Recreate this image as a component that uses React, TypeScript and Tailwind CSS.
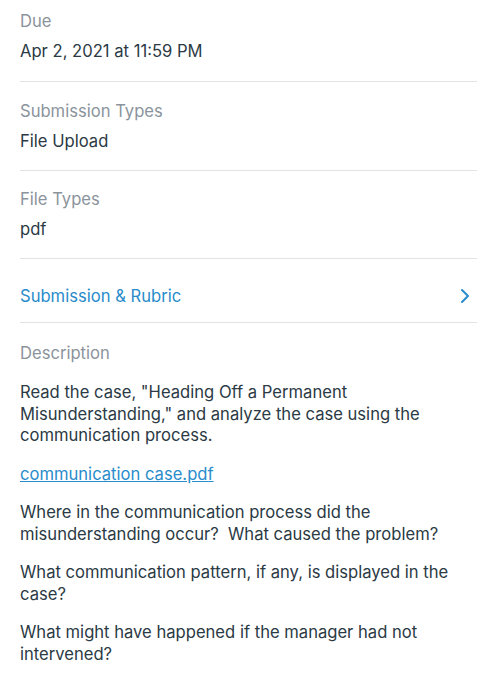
import React from "react";

function Field({ label, value, pt, pb }: { label: string; value: string; pt: string; pb: string }) {
  return (
    <div className={`${pt} ${pb} border-b border-[#e3e3e5]`}>
      <div className="text-[16.6px] leading-[20px] text-[#8b949c]">{label}</div>
      <div className="mt-[9px] text-[16.6px] leading-[22px] text-[#2b3a44]">{value}</div>
    </div>
  );
}

export default function App() {
  return (
    <div className="w-[497px] h-[700px] bg-white overflow-hidden" style={{ fontFamily: "Inter, 'Noto Sans', sans-serif" }}>
      <div className="ml-[20px] mr-[20px]">
        <Field pt="pt-[11px]" pb="pb-[19px]" label="Due" value="Apr 2, 2021 at 11:59 PM" />
        <Field pt="pt-[19px]" pb="pb-[18px]" label="Submission Types" value="File Upload" />
        <Field pt="pt-[18px]" pb="pb-[18px]" label="File Types" value="pdf" />
        <div className="h-[64px] flex items-center justify-between border-b border-[#e3e3e5] pt-[10px]">
          <span className="text-[16.6px] leading-[22px] text-[#2a8ccb]">Submission &amp; Rubric</span>
          <svg width="10" height="16" viewBox="0 0 10 16" className="mr-[7px]">
            <path d="M2 2 L8 8 L2 14" fill="none" stroke="#2a8ccb" strokeWidth="2" strokeLinecap="round" strokeLinejoin="round" />
          </svg>
        </div>
        <div className="pt-[20px]">
          <div className="text-[16.6px] leading-[20px] text-[#8b949c]">Description</div>
          <div className="mt-[19px] text-[16.6px] leading-[21.5px] text-[#2b3a44] pr-[10px] flex flex-col gap-[17px]">
            <p>Read the case, "Heading Off a Permanent Misunderstanding," and analyze the case using the communication process.</p>
            <p><a className="text-[#2a8ccb] underline">communication case.pdf</a></p>
            <p>Where in the communication process did the misunderstanding occur?&nbsp; What caused the problem?</p>
            <p>What communication pattern, if any, is displayed in the case?</p>
            <p>What might have happened if the manager had not intervened?</p>
          </div>
        </div>
      </div>
    </div>
  );
}
